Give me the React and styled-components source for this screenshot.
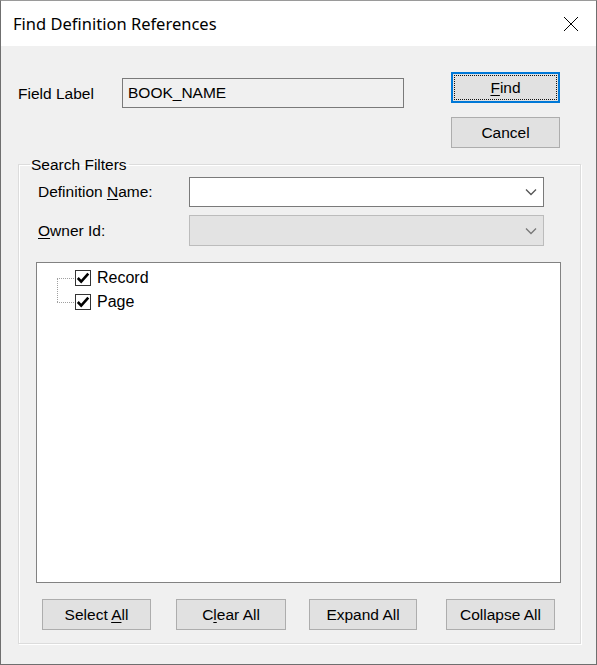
import React from "react";
import styled, { createGlobalStyle } from "styled-components";

const Global = createGlobalStyle`
  html, body { margin: 0; padding: 0; background: #ffffff; }
  body { font-family: "Liberation Sans", Arial, sans-serif; }
  * { box-sizing: border-box; }
`;

const Window = styled.div`
  width: 597px;
  height: 665px;
  display: flex;
  flex-direction: column;
  border: 1px solid #6f6f6f;
  border-top-color: #9a9a9a;
  background: #f0f0f0;
  overflow: hidden;
`;

const TitleBar = styled.div`
  height: 45px;
  background: #ffffff;
  display: flex;
  align-items: center;
  justify-content: space-between;
  padding: 0 17px 0 12px;
  flex-shrink: 0;
`;

const Title = styled.div`
  font-family: "Noto Sans", "Open Sans", sans-serif;
  font-size: 16.5px;
  color: #000;
  padding-bottom: 1px;
`;

const CloseIcon = styled.svg`
  width: 16px;
  height: 16px;
  display: block;
`;

const Body = styled.div`
  flex: 1;
  display: flex;
  flex-direction: column;
  padding: 26px 15px 20px 17px;
  font-size: 15.5px;
  color: #000;
`;

const TopSection = styled.div`
  display: flex;
  justify-content: space-between;
  align-items: flex-start;
  padding-right: 21px;
`;

const FieldRow = styled.div`
  display: flex;
  align-items: center;
  margin-top: 6px;
`;

const FieldLabel = styled.div`
  width: 104px;
  padding-top: 1px;
`;

const TextBox = styled.div`
  width: 282px;
  height: 30px;
  border: 1px solid #7a7a7a;
  background: #f0f0f0;
  display: flex;
  align-items: center;
  padding-left: 5px;
`;

const ButtonColumn = styled.div`
  display: flex;
  flex-direction: column;
  gap: 14px;
`;

const Button = styled.div`
  width: ${(p) => p.$w || 109}px;
  height: 31px;
  margin-left: ${(p) => p.$ml || 0}px;
  background: #e1e1e1;
  border: ${(p) => (p.$default ? "2px solid #0078d7" : "1px solid #adadad")};
  display: flex;
  align-items: center;
  justify-content: center;
  position: relative;
  font-size: 15.5px;
  flex-shrink: 0;
`;

const FocusRect = styled.div`
  position: absolute;
  inset: 1px;
  border: 1px dotted #111;
`;

const U = styled.span`
  text-decoration: underline;
  text-underline-offset: 2px;
`;

const Group = styled.fieldset`
  margin: 8px 0 0 0;
  padding: 4px 19px 11px 17px;
  border: 1px solid #dcdcdc;
  box-shadow: inset 1px 1px 0 #ffffff, 1px 1px 0 #ffffff;
  flex: 1;
  display: flex;
  flex-direction: column;
  min-width: 0;
`;

const Legend = styled.legend`
  padding: 0 2px 0 1px;
  margin-left: -6px;
  font-size: 15.5px;
  line-height: 17px;
`;

const ComboRow = styled.div`
  display: flex;
  align-items: center;
  margin-bottom: ${(p) => p.$mb || 0}px;
`;

const ComboLabel = styled.div`
  width: 153px;
  padding-left: 2px;
`;

const Combo = styled.div`
  width: 355px;
  height: ${(p) => p.$h || 30}px;
  background: ${(p) => (p.$disabled ? "#e3e3e3" : "#ffffff")};
  border: 1px solid ${(p) => (p.$disabled ? "#bcbcbc" : "#7a7a7a")};
  display: flex;
  align-items: center;
  justify-content: flex-end;
  padding-right: 6px;
`;

const Chevron = styled.svg`
  width: 12px;
  height: 8px;
  display: block;
`;

const Tree = styled.div`
  margin-top: 16px;
  height: 321px;
  background: #ffffff;
  border: 1px solid #828282;
  padding: 3px 0 0 20px;
  display: flex;
  flex-direction: column;
`;

const TreeItem = styled.div`
  display: flex;
  align-items: center;
  height: 24px;
  position: relative;
`;

const Connector = styled.div`
  width: 17px;
  height: 1px;
  border-top: 1px dotted #a0a0a0;
  margin-right: 1px;
`;

const VLine = styled.div`
  position: absolute;
  left: 0;
  top: 12px;
  height: 24px;
  border-left: 1px dotted #a0a0a0;
`;

const Check = styled.div`
  width: 16px;
  height: 16px;
  border: 1px solid #333333;
  background: #ffffff;
  display: flex;
  align-items: center;
  justify-content: center;
  margin-right: 6px;
`;

const ItemText = styled.span`
  font-size: 16px;
`;

const BottomButtons = styled.div`
  display: flex;
  margin: 16px 0 0 6px;
`;

function CheckMark() {
  return (
    <svg width="14" height="14" viewBox="0 0 14 14">
      <path d="M1.8 7 L5.2 10.6 L12.3 2.6" fill="none" stroke="#000" strokeWidth="2.6" />
    </svg>
  );
}

function ChevronDown({ color }) {
  return (
    <Chevron viewBox="0 0 12 8">
      <path d="M1 1.5 L6 6.5 L11 1.5" fill="none" stroke={color} strokeWidth="1.3" />
    </Chevron>
  );
}

export default function App() {
  return (
    <>
      <Global />
      <Window>
        <TitleBar>
          <Title>Find Definition References</Title>
          <CloseIcon viewBox="0 0 16 16">
            <path d="M1 1 L15 15 M15 1 L1 15" stroke="#000" strokeWidth="1" fill="none" />
          </CloseIcon>
        </TitleBar>
        <Body>
          <TopSection>
            <FieldRow>
              <FieldLabel>Field Label</FieldLabel>
              <TextBox>BOOK_NAME</TextBox>
            </FieldRow>
            <ButtonColumn>
              <Button $default>
                <FocusRect />
                <span>
                  <U>F</U>ind
                </span>
              </Button>
              <Button>Cancel</Button>
            </ButtonColumn>
          </TopSection>
          <Group>
            <Legend>Search Filters</Legend>
            <ComboRow $mb={8}>
              <ComboLabel>
                Definition <U>N</U>ame:
              </ComboLabel>
              <Combo>
                <ChevronDown color="#555" />
              </Combo>
            </ComboRow>
            <ComboRow>
              <ComboLabel>
                <U>O</U>wner Id:
              </ComboLabel>
              <Combo $disabled $h={31}>
                <ChevronDown color="#777" />
              </Combo>
            </ComboRow>
            <Tree>
              <TreeItem>
                <VLine />
                <Connector />
                <Check>
                  <CheckMark />
                </Check>
                <ItemText>Record</ItemText>
              </TreeItem>
              <TreeItem>
                <Connector />
                <Check>
                  <CheckMark />
                </Check>
                <ItemText>Page</ItemText>
              </TreeItem>
            </Tree>
            <BottomButtons>
              <Button>
                <span>
                  Select <U>A</U>ll
                </span>
              </Button>
              <Button $w={110} $ml={25}>
                <span>
                  C<U>l</U>ear All
                </span>
              </Button>
              <Button $w={108} $ml={23}>Expand All</Button>
              <Button $ml={29}>Collapse All</Button>
            </BottomButtons>
          </Group>
        </Body>
      </Window>
    </>
  );
}
